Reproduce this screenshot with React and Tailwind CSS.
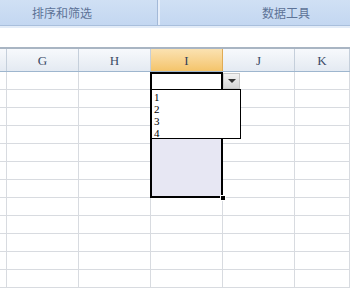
import React from "react";

const cols = ["", "G", "H", "I", "J", "K"];
const rows = Array.from({ length: 12 });

export default function App() {
  return (
    <div className="relative w-[350px] h-[289px] overflow-hidden bg-white" style={{ fontFamily: '"Liberation Sans", "Noto Sans CJK SC", sans-serif' }}>
      {/* Ribbon */}
      <div className="flex h-[26px] bg-gradient-to-b from-[#d0e0f4] to-[#c3d7f1] border-b border-[#a9bfdc]">
        <div className="w-[158px] flex items-center pl-[32px] text-[12px] text-[#5d7397] border-r border-[#a3b9d8]" style={{ fontFamily: '"Noto Sans CJK SC", sans-serif' }}>
          排序和筛选
        </div>
        <div className="w-[2px] bg-[#e6eefa]" />
        <div className="flex-1 flex items-center justify-end pr-[40px] text-[12px] text-[#5d7397]" style={{ fontFamily: '"Noto Sans CJK SC", sans-serif' }}>
          数据工具
        </div>
      </div>
      <div className="h-[2px] bg-[#e3ecf8]" />
      {/* formula area */}
      <div className="h-[21px] bg-white border-b-2 border-[#a9b5c3]" />
      {/* Column headers */}
      <div className="grid grid-cols-[7px_72px_72px_72px_72px_1fr] h-[23px] border-b border-[#9eb6ce]">
        {cols.map((c, i) => (
          <div
            key={i}
            className={
              "flex items-end justify-center pb-[2px] border-r text-[13px] leading-[16px] " +
              (c === "I"
                ? "bg-gradient-to-b from-[#fbe2b1] to-[#f4c46a] border-[#e0ab55] text-[#31405a]"
                : "bg-gradient-to-b from-[#f7f9fc] to-[#e4eaf2] border-[#c5cfdb] text-[#3a4b66]")
            }
            style={{ fontFamily: '"Liberation Serif", serif' }}
          >
            {c}
          </div>
        ))}
      </div>
      {/* Grid */}
      <div className="relative">
        {rows.map((_, r) => (
          <div key={r} className="grid grid-cols-[7px_72px_72px_72px_72px_1fr] h-[18px]">
            {cols.map((c, i) => (
              <div key={i} className="border-r border-b border-[#d8dbe0]" />
            ))}
          </div>
        ))}
        {/* Selection range */}
        <div className="absolute left-[150px] top-0 w-[73px] h-[126px] border-2 border-black bg-[#e7e7f3]">
          <div className="h-[15px] bg-white" />
          <div className="absolute right-[-5px] bottom-[-5px] w-[6px] h-[6px] bg-black border border-white" />
        </div>
        {/* Dropdown button */}
        <div className="absolute left-[223px] top-[1px] w-[17px] h-[16px] bg-gradient-to-b from-[#f2f2f2] to-[#d6d6d6] border border-[#c8c8c8] flex items-center justify-center">
          <div className="w-0 h-0 border-l-[4px] border-r-[4px] border-t-[4px] border-l-transparent border-r-transparent border-t-[#333]" />
        </div>
        {/* Dropdown list */}
        <div className="absolute left-[151px] top-[17px] w-[90px] h-[50px] bg-white border border-black pl-[2px] pt-[1px]">
          {["1", "2", "3", "4"].map((n) => (
            <div key={n} className="h-[12px] leading-[12px] text-[11px] text-black" style={{ fontFamily: '"Liberation Serif", serif' }}>
              {n}
            </div>
          ))}
        </div>
      </div>
    </div>
  );
}
